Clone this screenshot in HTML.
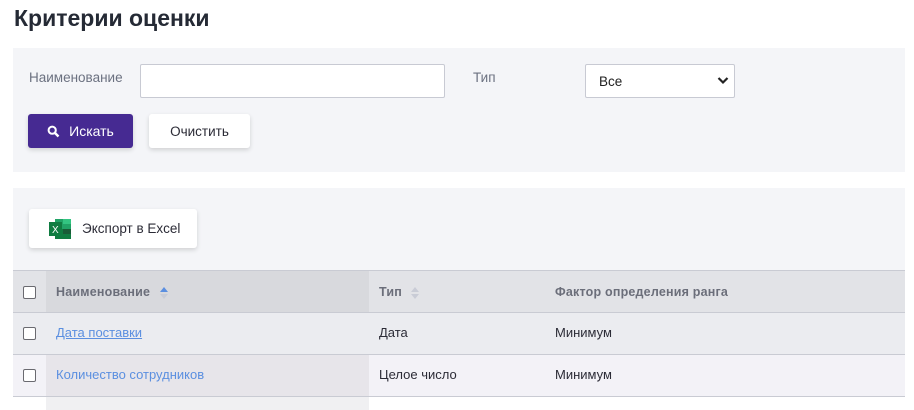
<!DOCTYPE html>
<html><head><meta charset="utf-8"><style>
*{box-sizing:border-box;margin:0;padding:0}
body{width:914px;height:410px;background:#fff;font-family:"Liberation Sans","Noto Sans CJK SC",sans-serif;position:relative;overflow:hidden;color:#2b2b36}
.a{position:absolute}
h1{position:absolute;left:14px;top:5px;font-size:23px;font-weight:bold;color:#252a35}
.p{background:#f4f5f8}
.lbl{font-size:13.5px;color:#6b7180}
.inp{background:#fff;border:1px solid #c8cad3;border-radius:2px}
.btn{border-radius:3px;font-size:13.5px;display:flex;align-items:center;justify-content:center;box-shadow:0 2px 5px rgba(0,0,0,.15)}
.cb{width:13px;height:13px;border:1.5px solid #6a6a70;border-radius:2px;background:#fff}
.row{position:absolute;left:13px;width:892px;height:42px;border-bottom:1px solid #c9cbd3;font-size:13px}
.row span{position:absolute;top:12px}
</style></head><body>
<h1>Критерии оценки</h1>
<div class="a p" style="left:13px;top:48px;width:892px;height:124px"></div>
<div class="a lbl" style="left:29px;top:70px">Наименование</div>
<div class="a inp" style="left:140px;top:64px;width:305px;height:34px"></div>
<div class="a lbl" style="left:473px;top:70px">Тип</div>
<div class="a inp" style="left:585px;top:64px;width:150px;height:34px;font-size:13.5px;padding:9px 0 0 13px;color:#222">Все
<svg class="a" style="left:131px;top:11px" width="12" height="9" viewBox="0 0 12 9"><path d="M1.5 2 L6 6.5 L10.5 2" stroke="#222" stroke-width="2.2" fill="none"/></svg></div>
<div class="a btn" style="left:28px;top:114px;width:105px;height:34px;background:#462a92;color:#fff;font-size:14px">
<svg width="13" height="13" viewBox="0 0 13 13" style="margin-right:9px"><circle cx="5.2" cy="5.2" r="3.6" stroke="#fff" stroke-width="2" fill="none"/><path d="M8 8 L11.5 11.5" stroke="#fff" stroke-width="2.4"/></svg>Искать</div>
<div class="a btn" style="left:149px;top:114px;width:101px;height:34px;background:#fff;color:#2b2b36">Очистить</div>

<div class="a p" style="left:13px;top:188px;width:892px;height:82px"></div>
<div class="a btn" style="left:29px;top:209px;width:168px;height:39px;background:#fff;justify-content:flex-start;padding-left:20px">
<svg width="23" height="20" viewBox="0 0 23 20" style="margin-right:10px"><rect x="6" y="0" width="16" height="20" fill="#21a366"/><rect x="14" y="0" width="8" height="5" fill="#33c481"/><rect x="6" y="10" width="16" height="10" fill="#107c41"/><rect x="14" y="10" width="8" height="5" fill="#185c37"/><rect x="0" y="3" width="13" height="14" fill="#107c41"/><text x="3" y="14" font-size="10" fill="#fff" font-family="Liberation Sans">X</text></svg>Экспорт в Excel</div>

<div class="row" style="top:270px;background:#e2e3e7;border-top:1px solid #c9cbd3;height:43px;font-weight:bold;font-size:12.5px;letter-spacing:0.2px;color:#6b6e7a">
<div class="a" style="left:33px;top:0;width:323px;height:41px;background:#d8d9dd"></div>
<div class="a cb" style="left:10px;top:15px"></div>
<span style="left:43px;top:14px">Наименование</span>
<svg class="a" style="left:147px;top:16px" width="8" height="12"><path d="M0 5 L4 0 L8 5Z" fill="#5b8fe0"/><path d="M0 7 L4 12 L8 7Z" fill="#c9ccd6"/></svg>
<span style="left:366px;top:14px">Тип</span>
<svg class="a" style="left:398px;top:16px" width="8" height="12"><path d="M0 5 L4 0 L8 5Z" fill="#c9ccd6"/><path d="M0 7 L4 12 L8 7Z" fill="#c9ccd6"/></svg>
<span style="left:542px;top:14px">Фактор определения ранга</span>
</div>
<div class="row" style="top:313px;background:#ebecf0">
<div class="a cb" style="left:10px;top:14px"></div>
<span style="left:43px;color:#5b8fe0;text-decoration:underline">Дата поставки</span>
<span style="left:366px">Дата</span>
<span style="left:542px">Минимум</span>
</div>
<div class="row" style="top:355px;background:#f3f2f7">
<div class="a" style="left:33px;top:0;width:323px;height:41px;background:#e7e5ea"></div>
<div class="a cb" style="left:10px;top:14px"></div>
<span style="left:43px;color:#5b8fe0">Количество сотрудников</span>
<span style="left:366px">Целое число</span>
<span style="left:542px">Минимум</span>
</div>
<div class="a" style="left:46px;top:397px;width:323px;height:13px;background:#f0f0f2"></div>
</body></html>
